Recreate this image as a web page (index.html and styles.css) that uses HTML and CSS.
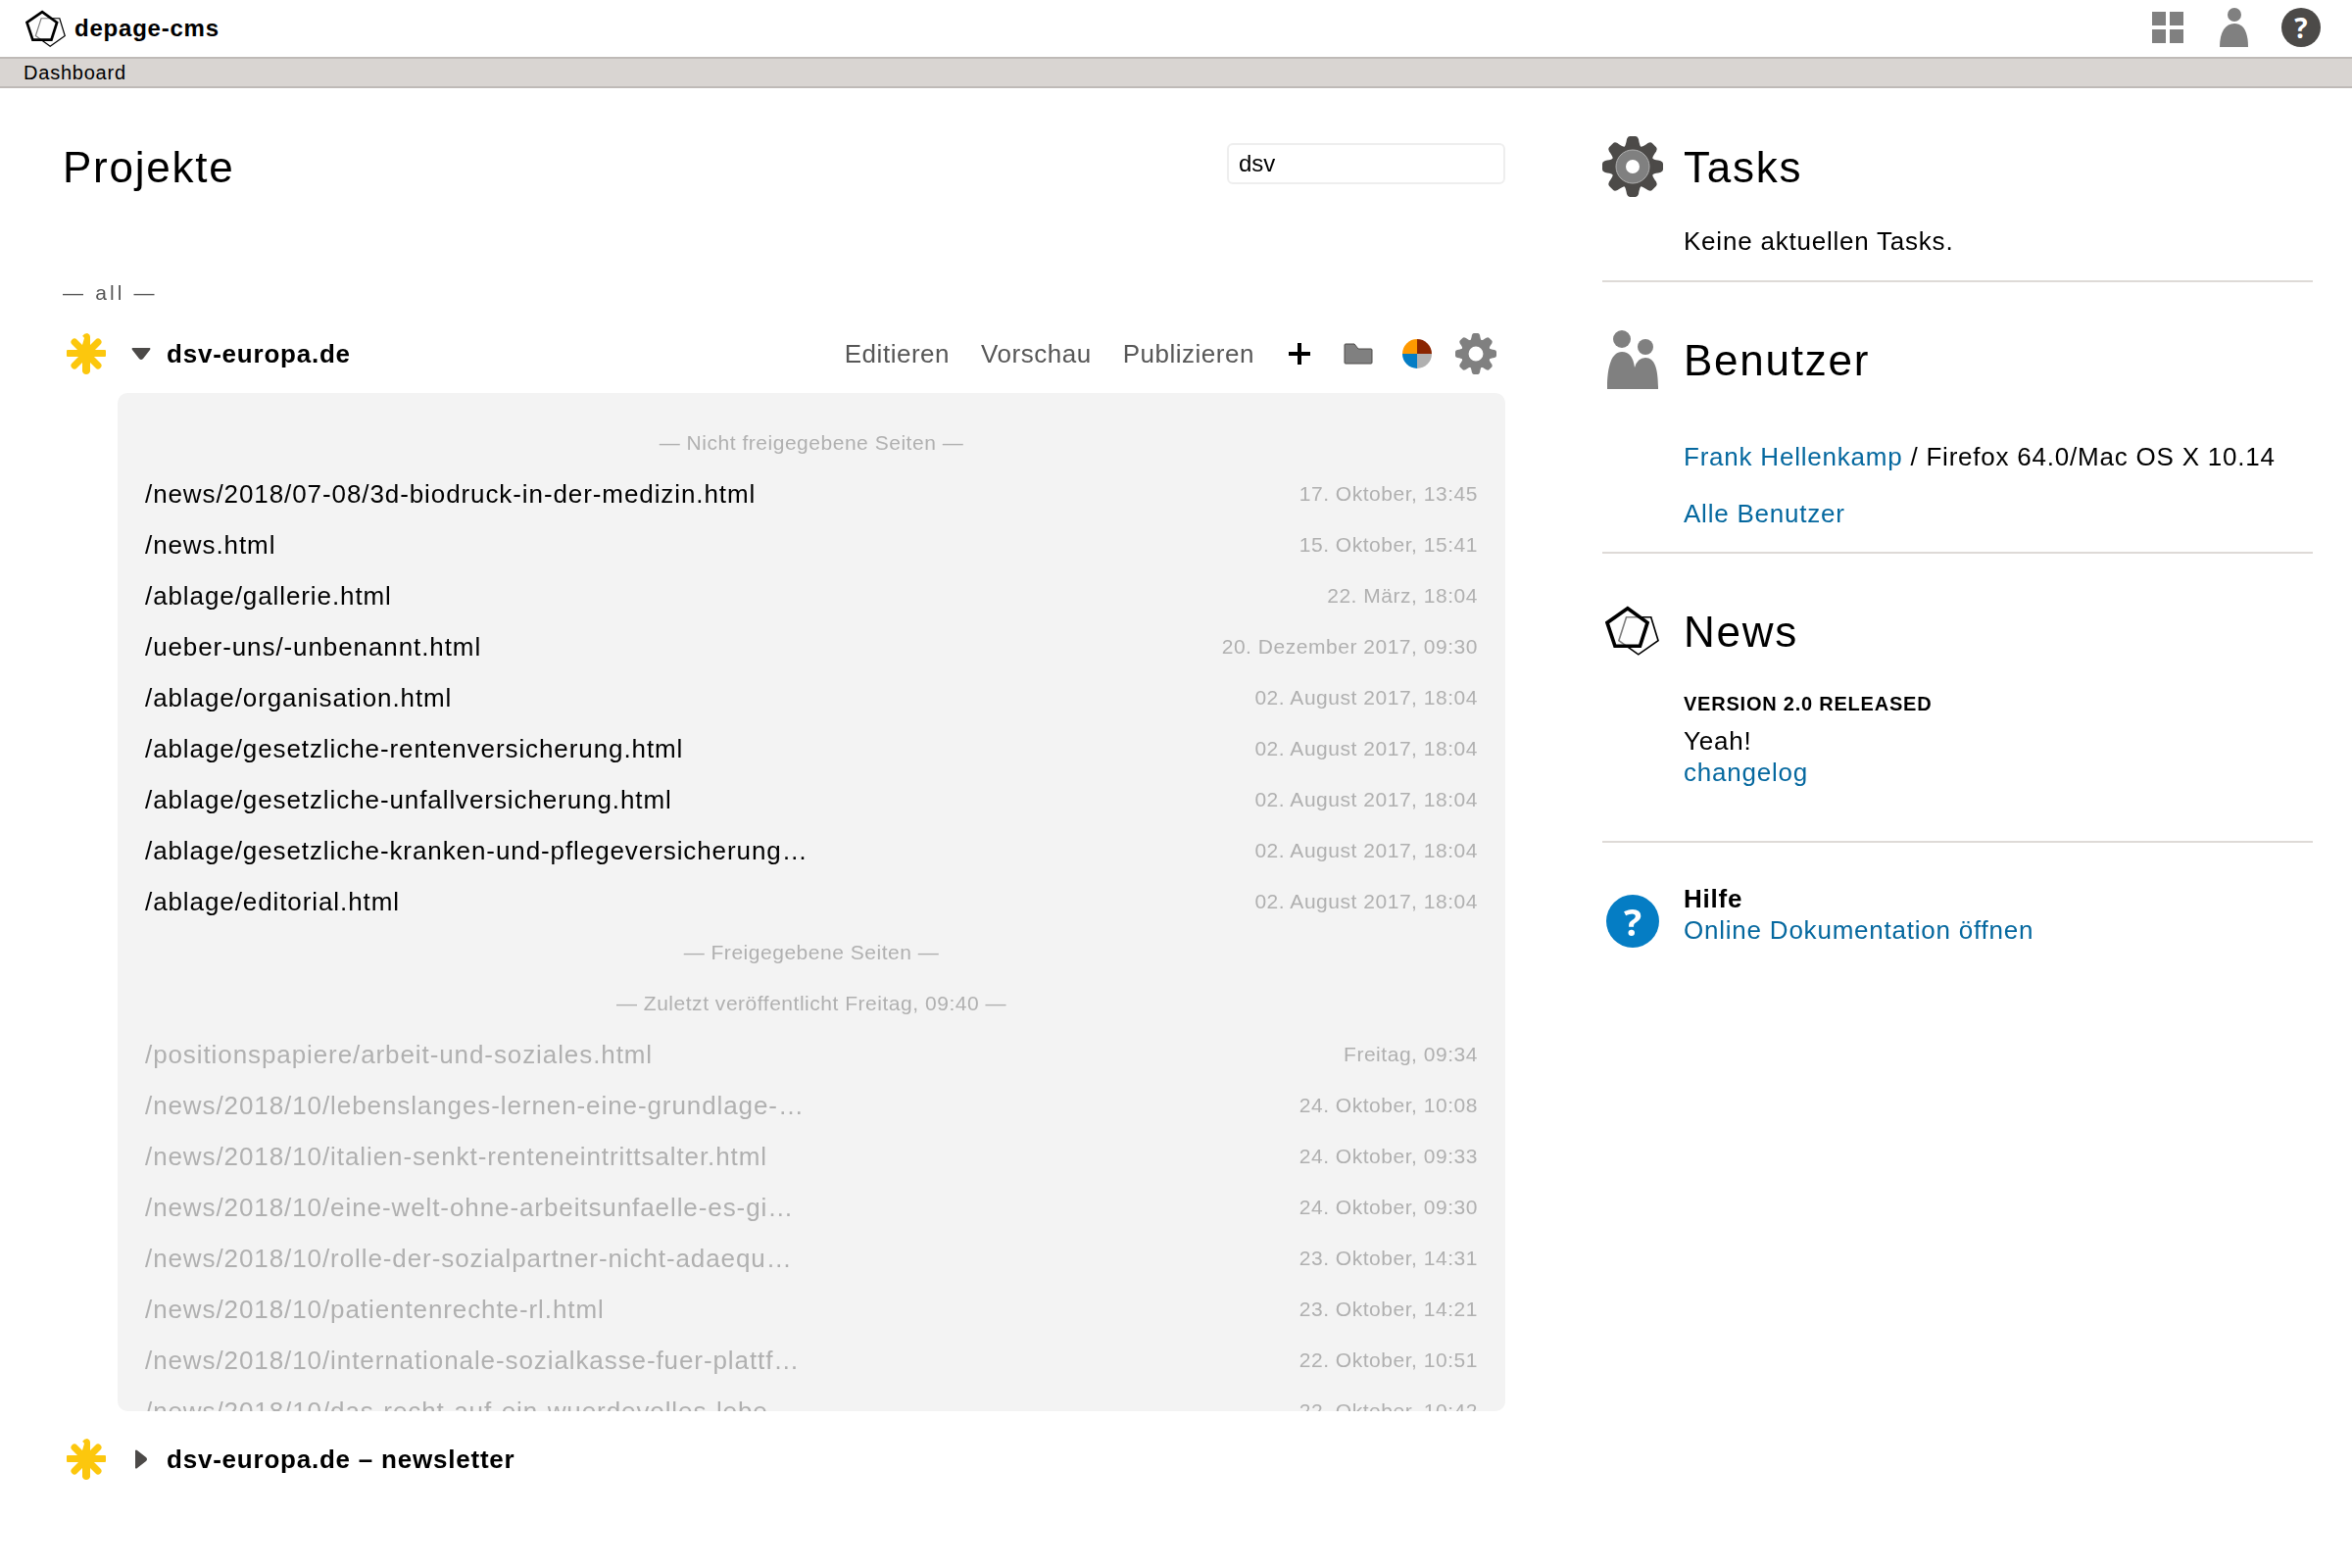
FILE: index.html
```html
<!DOCTYPE html>
<html lang="de">
<head>
<meta charset="utf-8">
<meta name="viewport" content="width=device-width, initial-scale=1">
<title>depage-cms – Dashboard</title>
<link rel="stylesheet" href="styles.css">
</head>
<body>
<svg class="sprite" aria-hidden="true">
  <symbol id="logo" viewBox="0 0 166 153">
    <path d="M65 35H141L163 107L102 150L42 107Z" fill="none" stroke="#000" stroke-width="5"/>
    <path d="M69 8L130 52L107 124H30L6 52Z" fill="#fdfdfd" fill-opacity=".5" stroke="#000" stroke-width="11"/>
  </symbol>
  <symbol id="gear" viewBox="-31 -31 62 62">
    <path id="t" d="M-13-17C-8-18-7-22-6-28Q-5-31-3-31H3Q5-31 6-28C7-22 8-18 13-17L8-12H-8Z"/>
    <use href="#t" transform="rotate(45)"/><use href="#t" transform="rotate(90)"/><use href="#t" transform="rotate(135)"/><use href="#t" transform="rotate(180)"/><use href="#t" transform="rotate(225)"/><use href="#t" transform="rotate(270)"/><use href="#t" transform="rotate(315)"/>
    <path fill-rule="evenodd" d="M0-22A22 22 0 0 1 0 22A22 22 0 0 1 0-22ZM0-11A11 11 0 0 0 0 11A11 11 0 0 0 0-11Z"/>
  </symbol>
  <symbol id="star" viewBox="0 0 42 42">
    <path d="M9 9L33 33M33 9L9 33" fill="none" stroke="#fcc70d" stroke-width="7" stroke-linecap="round"/>
    <path fill="#fcc70d" d="M2 17H40Q41 17 41 18V23Q41 24 40 24H2Q1 24 1 23V18Q1 17 2 17ZM17 3Q19 0 22 0Q25 1 25 4V39Q24 42 21 42Q18 42 17 39L17 12L19 5Q18 3 17 3Z"/>
  </symbol>
</svg>

<header class="topbar">
  <a class="brand" href="#"><svg class="brand-logo" aria-hidden="true"><use href="#logo"/></svg>depage-cms</a>
  <nav class="tools" aria-label="Werkzeuge">
    <button class="tool" type="button" aria-label="Projekte"><svg width="32" height="32" viewBox="0 0 32 32"><path fill="#808080" d="M0 0H14V14H0ZM18 0H32V14H18ZM0 18H14V32H0ZM18 18H32V32H18Z"/></svg></button>
    <button class="tool" type="button" aria-label="Benutzer"><svg width="30" height="40" viewBox="0 0 30 40"><circle cx="15" cy="7" r="7" fill="#808080"/><path fill="#808080" d="M0 40C0 24 6 16 15 16S29 24 29 40Z"/></svg></button>
    <button class="tool" type="button" aria-label="Hilfe"><span class="help">?</span></button>
  </nav>
</header>
<nav class="crumbs" aria-label="Pfad"><a href="#">Dashboard</a></nav>

<div class="layout">
  <main>
    <div class="head">
      <h1>Projekte</h1>
      <input class="search" type="search" value="dsv" aria-label="Projekte filtern">
    </div>
    <p class="group">— all —</p>

    <section>
      <div class="project">
        <svg class="star" aria-hidden="true"><use href="#star"/></svg>
        <h2><button class="toggle" type="button" aria-expanded="true"><svg class="arrow" viewBox="0 0 20 20"><path fill="#4c4a48" d="M1 4H19Q20 5 19 6L12 15Q10 17 8 15L1 6Q0 5 1 4Z"/></svg>dsv-europa.de</button></h2>
        <div class="actions">
          <a href="#">Editieren</a>
          <a href="#">Vorschau</a>
          <a href="#">Publizieren</a>
          <button class="action" type="button" aria-label="Neu"><svg width="22" height="22" viewBox="0 0 22 22"><path d="M9 0H13V9H22V13H13V22H9V13H0V9H9Z"/></svg></button>
          <button class="action" type="button" aria-label="Dateien"><svg width="30" height="22" viewBox="0 0 30 22"><path d="M1 2Q1 1 2 1H11L15 6H28Q29 6 29 7V20Q29 21 28 21H2Q1 21 1 20Z" fill="#808080" stroke="#4c4a48"/></svg></button>
          <button class="action" type="button" aria-label="Farben"><svg width="30" height="30" viewBox="0 0 30 30"><path fill="#f90" d="M15 15V0A15 15 0 0 0 0 15Z"/><path fill="#8b2500" d="M15 15H30A15 15 0 0 0 15 0Z"/><path fill="#057dc4" d="M15 15H0A15 15 0 0 0 15 30Z"/><path fill="#b0b0b0" d="M15 15V30A15 15 0 0 0 30 15Z"/></svg></button>
          <button class="action" type="button" aria-label="Einstellungen"><svg class="gear-small" fill="#808080"><use href="#gear"/></svg></button>
        </div>
      </div>
      <div class="panel">
        <table>
          <tbody>
            <tr><th colspan="2">— Nicht freigegebene Seiten —</th></tr>
            <tr><td><a href="#">/news/2018/07-08/3d-biodruck-in-der-medizin.html</a></td><td>17. Oktober, 13:45</td></tr>
            <tr><td><a href="#">/news.html</a></td><td>15. Oktober, 15:41</td></tr>
            <tr><td><a href="#">/ablage/gallerie.html</a></td><td>22. März, 18:04</td></tr>
            <tr><td><a href="#">/ueber-uns/-unbenannt.html</a></td><td>20. Dezember 2017, 09:30</td></tr>
            <tr><td><a href="#">/ablage/organisation.html</a></td><td>02. August 2017, 18:04</td></tr>
            <tr><td><a href="#">/ablage/gesetzliche-rentenversicherung.html</a></td><td>02. August 2017, 18:04</td></tr>
            <tr><td><a href="#">/ablage/gesetzliche-unfallversicherung.html</a></td><td>02. August 2017, 18:04</td></tr>
            <tr><td><a href="#">/ablage/gesetzliche-kranken-und-pflegeversicherung…</a></td><td>02. August 2017, 18:04</td></tr>
            <tr><td><a href="#">/ablage/editorial.html</a></td><td>02. August 2017, 18:04</td></tr>
          </tbody>
          <tbody class="released">
            <tr><th colspan="2">— Freigegebene Seiten —</th></tr>
            <tr><th colspan="2">— Zuletzt veröffentlicht Freitag, 09:40 —</th></tr>
            <tr><td><a href="#">/positionspapiere/arbeit-und-soziales.html</a></td><td>Freitag, 09:34</td></tr>
            <tr><td><a href="#">/news/2018/10/lebenslanges-lernen-eine-grundlage-…</a></td><td>24. Oktober, 10:08</td></tr>
            <tr><td><a href="#">/news/2018/10/italien-senkt-renteneintrittsalter.html</a></td><td>24. Oktober, 09:33</td></tr>
            <tr><td><a href="#">/news/2018/10/eine-welt-ohne-arbeitsunfaelle-es-gi…</a></td><td>24. Oktober, 09:30</td></tr>
            <tr><td><a href="#">/news/2018/10/rolle-der-sozialpartner-nicht-adaequ…</a></td><td>23. Oktober, 14:31</td></tr>
            <tr><td><a href="#">/news/2018/10/patientenrechte-rl.html</a></td><td>23. Oktober, 14:21</td></tr>
            <tr><td><a href="#">/news/2018/10/internationale-sozialkasse-fuer-plattf…</a></td><td>22. Oktober, 10:51</td></tr>
            <tr><td><a href="#">/news/2018/10/das-recht-auf-ein-wuerdevolles-lebe…</a></td><td>22. Oktober, 10:42</td></tr>
          </tbody>
        </table>
      </div>
    </section>

    <section>
      <div class="project">
        <svg class="star" aria-hidden="true"><use href="#star"/></svg>
        <h2><button class="toggle" type="button" aria-expanded="false"><svg class="arrow" viewBox="0 0 20 20"><path fill="#4c4a48" d="M4 1Q5 0 6 1L15 8Q17 10 15 12L6 19Q5 20 4 19Z"/></svg>dsv-europa.de – newsletter</button></h2>
      </div>
    </section>
  </main>

  <aside>
    <section class="box">
      <svg class="gear-big" aria-hidden="true" viewBox="-31 -31 62 62"><use href="#gear" x="-31" y="-31" width="62" height="62" fill="#4c4a48"/><circle r="12" fill="none" stroke="#808080" stroke-width="10"/><circle r="17" fill="none" stroke="#b0b0b0"/></svg>
      <h1>Tasks</h1>
      <div class="body tasks"><p>Keine aktuellen Tasks.</p></div>
    </section>
    <section class="box">
      <svg width="52" height="60" viewBox="0 0 52 60" aria-hidden="true"><g fill="#808080"><circle cx="15" cy="9" r="9"/><circle cx="39" cy="17" r="8"/><path d="M0 60C0 38 4 22 15 22Q26 22 28 38Q31 28 39 28C49 28 52 40 52 60Z"/></g></svg>
      <h1>Benutzer</h1>
      <div class="body users">
        <p><a href="#">Frank Hellenkamp</a> / Firefox 64.0/Mac OS X 10.14</p>
        <p><a href="#">Alle Benutzer</a></p>
      </div>
    </section>
    <section class="box">
      <svg class="news-logo" aria-hidden="true"><use href="#logo"/></svg>
      <h1>News</h1>
      <div class="body news">
        <h2>Version 2.0 released</h2>
        <p>Yeah!</p>
        <p><a href="#">changelog</a></p>
      </div>
    </section>
    <section class="box support">
      <span class="help help-big" aria-hidden="true">?</span>
      <div class="text">
        <h2>Hilfe</h2>
        <p><a href="#">Online Dokumentation öffnen</a></p>
      </div>
    </section>
  </aside>
</div>
</body>
</html>
```
FILE: styles.css
```css
* { box-sizing: border-box; }

body {
  margin: 0;
  background: #fff;
  color: #000;
  font: 26px/32px "Liberation Sans", Arial, sans-serif;
  letter-spacing: 0.03em;
}

h1, h2, p { margin: 0; font-size: inherit; }
a { color: #05689f; text-decoration: none; }
svg { display: block; }
button {
  padding: 0;
  border: 0;
  background: none;
  color: inherit;
  font: inherit;
  letter-spacing: inherit;
  cursor: pointer;
}
h1 {
  font-size: 44px;
  line-height: 52px;
  font-weight: 400;
  letter-spacing: 0.04em;
}

.sprite { position: absolute; width: 0; height: 0; }

.topbar {
  display: flex;
  justify-content: space-between;
  height: 58px;
  padding: 0 18px 0 26px;
}
.brand {
  display: flex;
  align-items: center;
  gap: 9px;
  color: #000;
  font-size: 24px;
  font-weight: 700;
}
.brand-logo { width: 41px; height: 38px; }
.tools { display: flex; padding-bottom: 2px; }
.tool {
  display: grid;
  place-items: center;
  width: 68px;
}
.help {
  display: grid;
  place-items: center;
  width: 40px;
  height: 40px;
  border-radius: 50%;
  background: #4c4a48;
  color: #fff;
  font: 700 28px/38px "Open Sans", sans-serif;
  letter-spacing: 0;
}
.crumbs {
  padding: 0 24px;
  border: solid #bfbab7;
  border-width: 2px 0;
  background: #d9d5d2;
  font-size: 20px;
  line-height: 28px;
}
.crumbs a { color: #000; }

.layout {
  display: grid;
  grid-template-columns: 67fr 33fr;
  gap: 99px;
  padding: 55px 40px 55px 64px;
}

.head {
  display: flex;
  justify-content: space-between;
  align-items: center;
}
.search {
  width: 284px;
  height: 42px;
  margin-bottom: 8px;
  padding: 0 10px;
  border: 2px solid #eee;
  border-radius: 6px;
  background: #fff;
  color: #000;
  font: 24px/32px "Liberation Sans", Arial, sans-serif;
  appearance: none;
}
.group {
  margin: 86px 0 20px;
  color: #575757;
  font-size: 21px;
  letter-spacing: 0.15em;
}

.project {
  display: flex;
  align-items: center;
  height: 52px;
}
.star { width: 42px; height: 42px; margin: 0 25px 0 3px; }
.toggle {
  display: flex;
  align-items: center;
  gap: 16px;
  font-weight: 700;
}
.arrow { width: 20px; height: 20px; }
.actions {
  display: flex;
  align-items: center;
  margin-left: auto;
}
.actions a {
  padding: 0 16px;
  color: #575757;
  letter-spacing: 0.02em;
}
.action {
  display: grid;
  place-items: center;
  width: 60px;
  height: 52px;
}
.gear-small { width: 42px; height: 42px; }

.panel {
  max-height: 1039px;
  margin: 14px 0 23px 56px;
  padding: 25px 28px 0;
  overflow-y: auto;
  scrollbar-width: none;
  border-radius: 10px;
  background: #f3f3f3;
}
table { width: 100%; border-collapse: collapse; }
tr { height: 52px; }
th, td { padding: 0; white-space: nowrap; }
td { letter-spacing: 0.035em; }
th, td + td {
  color: #b0b0b0;
  font-size: 21px;
  font-weight: 400;
  letter-spacing: 0.025em;
}
td + td { text-align: right; }
td a { color: #000; }
.released a { color: #b0b0b0; }

.box {
  display: grid;
  grid-template-columns: 62px 1fr;
  column-gap: 21px;
  align-items: center;
  justify-items: center;
  padding-bottom: 23px;
}
.box + .box { padding-top: 54px; border-top: 2px solid #dedad7; }
.box h1, .text { justify-self: start; }
.box > svg { margin: -8px 0 -5px; }
.body { grid-column: 2; justify-self: start; }
.gear-big { width: 62px; height: 62px; }
.news-logo { width: 55px; height: 51px; }
.tasks { margin: 33px 0 1px; }
.users { display: grid; gap: 26px; margin-top: 56px; }
.news { margin: 31px 0 31px; }
.news h2 {
  margin-bottom: 6px;
  font-size: 20px;
  text-transform: uppercase;
}
.box.support { padding-top: 41px; }
.help-big {
  width: 54px;
  height: 54px;
  margin-top: 12px;
  background: #057dc4;
  font-size: 38px;
  line-height: 52px;
}
.text { margin-bottom: 2px; }
```
